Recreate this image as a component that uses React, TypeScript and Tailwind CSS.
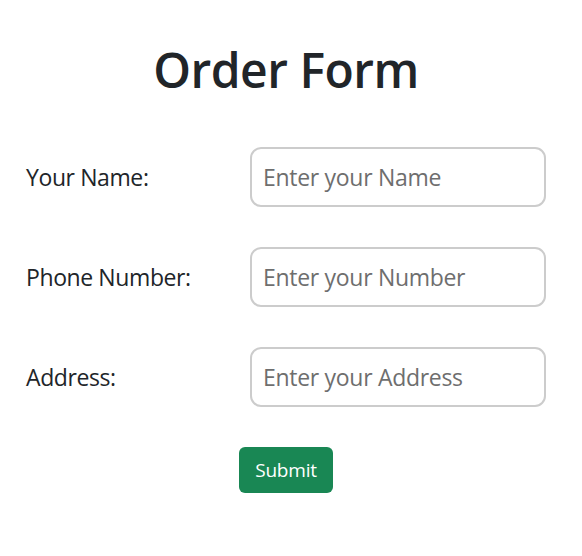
import React from "react";

export default function App() {
  const rows = [
    { label: "Your Name:", ph: "Enter your Name" },
    { label: "Phone Number:", ph: "Enter your Number" },
    { label: "Address:", ph: "Enter your Address" },
  ];
  return (
    <div
      className="w-[572px] bg-white text-[#212529] min-h-[556px]"
      style={{ fontFamily: '"Open Sans", "Noto Sans", sans-serif' }}
    >
      <h1 className="text-center text-[48px] font-semibold leading-none pt-[46px] tracking-[-0.5px]">
        Order Form
      </h1>
      <div className="flex flex-col gap-[40px] mt-[53px] px-[26px]">
        {rows.map((r) => (
          <div key={r.label} className="flex items-center">
            <label className="w-[224px] text-[23px] tracking-[-0.4px]">{r.label}</label>
            <input
              placeholder={r.ph}
              className="w-[296px] h-[60px] border-2 border-[#cccccc] rounded-[11px] px-[11px] text-[23px] tracking-[-0.3px] placeholder:text-[#6e6e6e] outline-none"
            />
          </div>
        ))}
      </div>
      <div className="flex justify-center mt-[40px]">
        <button className="w-[94px] h-[46px] rounded-[6px] bg-[#198754] text-white text-[19px] tracking-[-0.2px]">
          Submit
        </button>
      </div>
    </div>
  );
}
